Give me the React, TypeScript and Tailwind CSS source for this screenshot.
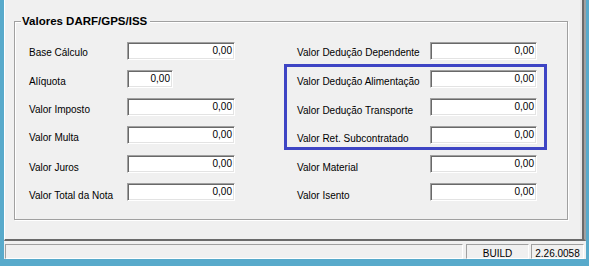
import React from "react";

type Row = { label: string; value: string; shift: string; narrow?: boolean };

const leftRows: Row[] = [
  { label: "Base Cálculo", value: "0,00", shift: "translate-y-[2px]" },
  { label: "Alíquota", value: "0,00", shift: "translate-y-[3px]", narrow: true },
  { label: "Valor Imposto", value: "0,00", shift: "translate-y-[3px]" },
  { label: "Valor Multa", value: "0,00", shift: "translate-y-[3px]" },
  { label: "Valor Juros", value: "0,00", shift: "translate-y-[4px]" },
  { label: "Valor Total da Nota", value: "0,00", shift: "translate-y-[4px]" },
];

const rightRows: Row[] = [
  { label: "Valor Dedução Dependente", value: "0,00", shift: "translate-y-[2px]" },
  { label: "Valor Dedução Alimentação", value: "0,00", shift: "translate-y-[3px]" },
  { label: "Valor Dedução Transporte", value: "0,00", shift: "translate-y-[4px]" },
  { label: "Valor Ret. Subcontratado", value: "0,00", shift: "translate-y-[4px]" },
  { label: "Valor Material", value: "0,00", shift: "translate-y-[4px]" },
  { label: "Valor Isento", value: "0,00", shift: "translate-y-[4px]" },
];

const Field = ({ value, width }: { value: string; width: string }) => (
  <div
    className={`${width} h-[18px] bg-white border border-t-[#a0a0a0] border-l-[#a0a0a0] border-b-white border-r-white shadow-[inset_1px_1px_0_#696969,inset_-1px_-1px_0_#e3e3e3] text-right pr-[2px] leading-[16px] text-[10px] text-black`}
  >
    {value}
  </div>
);

const Column = ({
  rows,
  labelWidth,
  fieldWidth,
}: {
  rows: Row[];
  labelWidth: string;
  fieldWidth: string;
}) => (
  <div className="flex flex-col gap-[10px]">
    {rows.map((r, i) => (
      <div key={i} className={`flex items-start ${i === 4 ? "mt-[1px]" : ""}`}>
        <div className={`${labelWidth} h-[18px] leading-[18px] text-[10px] text-black ${r.shift}`}>
          {r.label}
        </div>
        <Field value={r.value} width={r.narrow ? "w-[46px]" : fieldWidth} />
      </div>
    ))}
  </div>
);

export default function App() {
  return (
    <div className="w-[589px] h-[266px] bg-[#58aacb] pl-[4px] pr-[3px] pb-[7px] flex flex-col font-['Liberation_Sans',Arial,sans-serif] overflow-hidden">
      <div className="flex-1 flex flex-col bg-[#f0f0f0]">
        <div className="h-[241px] border-l border-l-white border-r-2 border-r-[#a0a0a0] border-b-2 border-b-[#6a6a6a] shadow-[inset_-2px_0_0_#6a6a6a,inset_-4px_0_0_#e6e6e6] pl-[9px] pt-[21px]">
          <div className="relative w-[554px] h-[199px] border border-[#a0a0a0] shadow-[inset_1px_1px_0_#ffffff,1px_1px_0_#ffffff] pt-[20px] pl-[14px]">
            <div className="absolute left-[6px] top-[-8px] pl-[1px] pr-[3px] bg-[#f0f0f0] text-[11.5px] leading-[14px] font-bold text-black">
              Valores DARF/GPS/ISS
            </div>
            <div className="flex">
              <Column rows={leftRows} labelWidth="w-[98px]" fieldWidth="w-[108px]" />
              <div className="ml-[62px]">
                <Column rows={rightRows} labelWidth="w-[133px]" fieldWidth="w-[107px]" />
              </div>
            </div>
            <div className="absolute left-[269px] top-[42px] w-[263px] h-[86px] border-[3px] border-[#3e45c4] pointer-events-none" />
          </div>
        </div>
        <div className="flex h-[15px] mt-[3px] pl-[1px] pr-[2px] text-[10px] text-black">
          <div className="flex-1 border border-t-[#a0a0a0] border-l-[#a0a0a0] border-b-white border-r-white" />
          <div className="w-[63px] ml-[3px] border border-t-[#a0a0a0] border-l-[#a0a0a0] border-b-white border-r-white text-center leading-[15px] pt-[1px]">
            BUILD
          </div>
          <div className="w-[53px] ml-[2px] border border-t-[#a0a0a0] border-l-[#a0a0a0] border-b-white border-r-white text-center leading-[15px] pt-[1px]">
            2.26.0058
          </div>
        </div>
      </div>
    </div>
  );
}
